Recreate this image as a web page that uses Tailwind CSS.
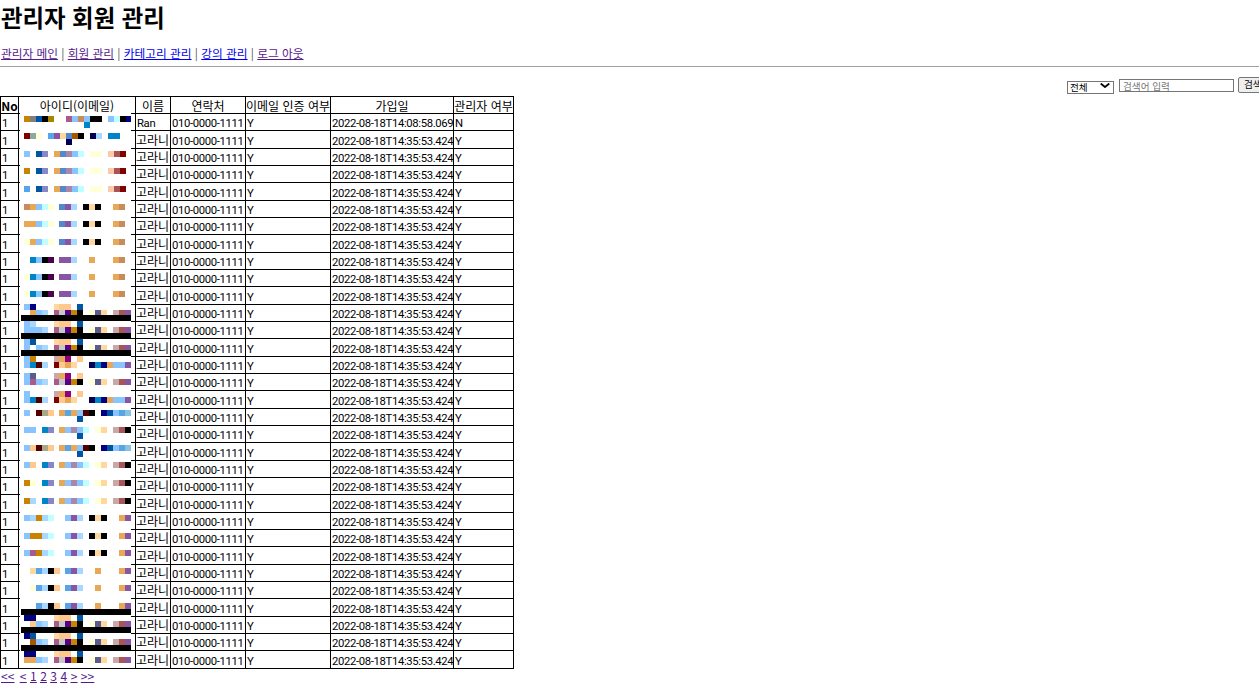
<!DOCTYPE html>
<html lang="ko">
  <head>
    <meta charset="UTF-8" />
    <title>관리자 회원 관리</title>
    <script src="https://cdn.jsdelivr.net/npm/@tailwindcss/browser@4"></script>
  </head>
  <body class="h-[686px] overflow-hidden bg-white text-[12px] leading-[16px] text-black font-['Noto_Sans_CJK_KR','Noto_Sans',sans-serif]">
    <h1 class="pl-px pt-[2px] text-[23.4px] leading-[30px] font-bold">관리자 회원 관리</h1>

    <nav class="mt-[13px] pl-px text-[11.7px] text-[#555]">
      <a href="#" class="text-[#551a8b] underline">관리자 메인</a> |
      <a href="#" class="text-[#551a8b] underline">회원 관리</a> |
      <a href="#" class="text-[#0000ee] underline">카테고리 관리</a> |
      <a href="#" class="text-[#0000ee] underline">강의 관리</a> |
      <a href="#" class="text-[#551a8b] underline">로그 아웃</a>
    </nav>

    <hr class="mt-[5px] border-t border-[#a0a0a0]" />

    <form class="mt-[10px] ml-[1067px] flex h-[16px] w-max items-end gap-[4px] text-[9.6px]">
      <div class="relative mb-px h-[13px] w-[47px]">
        <select class="h-[13px] w-[47px] appearance-none border border-[#767676] py-0 pl-[2px] text-[9.6px] leading-[11px]">
          <option>전체</option>
        </select>
        <svg class="absolute top-[4px] right-[4px]" width="10" height="5" viewBox="0 0 10 5" fill="none" stroke="#000" stroke-width="1.8"><path d="M.7.5 5 4 9.3.5" /></svg>
      </div>
      <input placeholder="검색어 입력" class="mb-px ml-px h-[13px] w-[115px] border border-[#767676] px-[3px] py-0 text-[9.6px] leading-[11px] placeholder:text-[#757575]" />
      <button type="button" class="h-[16px] w-[32px] shrink-0 rounded-[2px] border border-[#767676] bg-[#efefef] pl-[5px] text-left text-[9.6px] leading-none">검색</button>
    </form>

    <div class="relative mt-[3px] w-[514px]">
      <table class="w-[514px] table-fixed border-collapse border border-black">
        <colgroup>
          <col class="w-[18px]" />
          <col class="w-[117px]" />
          <col class="w-[35px]" />
          <col class="w-[75px]" />
          <col class="w-[85px]" />
          <col class="w-[123px]" />
          <col class="w-[60px]" />
        </colgroup>
        <thead>
          <tr class="h-[17px]">
            <th class="border border-black p-0 pt-[2px] leading-[14px] font-bold whitespace-nowrap">No</th>
            <th class="border border-black p-0 pt-[2px] leading-[14px] font-normal whitespace-nowrap">아이디(이메일)</th>
            <th class="border border-black p-0 pt-[2px] leading-[14px] font-normal whitespace-nowrap">이름</th>
            <th class="border border-black p-0 pt-[2px] leading-[14px] font-normal whitespace-nowrap">연락처</th>
            <th class="border border-black p-0 pt-[2px] leading-[14px] font-normal whitespace-nowrap">이메일 인증 여부</th>
            <th class="border border-black p-0 pt-[2px] leading-[14px] font-normal whitespace-nowrap">가입일</th>
            <th class="border border-black p-0 pt-[2px] leading-[14px] font-normal whitespace-nowrap">관리자 여부</th>
          </tr>
        </thead>
        <tbody id="rows"></tbody>
      </table>
      <!-- 아이디 가림 처리 -->
      <svg id="mask" class="absolute top-[17px] left-[20px]" width="111" height="555" viewBox="20 113 111 555" shape-rendering="crispEdges"></svg>
    </div>

    <div class="-mt-px flex gap-[3.5px] pl-px text-[#551a8b] underline">
      <a href="#" class="mr-[2px]">&lt;&lt;</a><a href="#">&lt;</a><a href="#">1</a><a href="#">2</a><a href="#">3</a><a href="#">4</a><a href="#">&gt;</a><a href="#">&gt;&gt;</a>
    </div>

    <script>
      const tbody = document.getElementById('rows');
      const cellClass = "border border-black p-0 pt-[3px] pl-px leading-[13px] whitespace-nowrap overflow-hidden text-[11.3px] tracking-[-0.35px] font-['Roboto','Noto_Sans_CJK_KR',sans-serif]";
      for (let i = 0; i < 32; i++) {
        const first = i === 0;
        const vals = [
          '1',
          '',
          first ? 'Ran' : '고라니',
          '010-0000-1111',
          'Y',
          first ? '2022-08-18T14:08:58.069' : '2022-08-18T14:35:53.424',
          first ? 'N' : 'Y',
        ];
        const tr = document.createElement('tr');
        // 17.34px average, table rows snap to whole pixels
        tr.style.height = (i % 3 === 1 ? 18 : 17) + 'px';
        vals.forEach((v, c) => {
          const td = document.createElement('td');
          td.className = cellClass;
          if (c === 2 && !first) td.style.cssText = 'font-size:12px;letter-spacing:0;padding-left:0';
          td.textContent = v;
          tr.appendChild(td);
        });
        tbody.appendChild(tr);
      }

      const colors = {
        a: '#88c4ff', b: '#0055a5', c: '#c88400', d: '#0084c8', e: '#e8a855', f: '#8855a5',
        g: '#c88c5c', h: '#a8d8ff', i: '#c0ffff', j: '#ffffd8', k: '#000000', l: '#ffd8a0',
        m: '#ffc88c', n: '#5588c8', o: '#55a5e8', p: '#a85c8c', q: '#000080', r: '#800000',
        s: '#a85555', t: '#8888c8', u: '#c8a8a8', v: '#5c5c8c', w: '#c8c8c8', x: '#550088',
        y: '#500050', z: '#808080', A: '#a88400', B: '#8caaa0', C: '#a85500', D: '#a888a8',
        E: '#ffc8a8', G: '#900080', H: '#a8a888', I: '#88c4e0', Q: '#000055', R: '#500000',
      };
      // [y, colour string, shift of the right part]
      const lines = [
        [116, 'czbkA..pagakk.aikq', 0], [122, '..........d', 0],
        [133, 'rBj.oflnCk.Qh.dd', 0], [139, '.......Q', 0],
        [151, 'a.bt.enDai.jj.Esr', 0],
        [168, 'c.bt.enDai.jj.Esr', 0],
        [186, 'o.bt.enDai.jj.Esr', 0],
        [204, 'geaij.nfh.klk..eg', -1],
        [221, 'eeaij.nfh.klk..eg', -1],
        [239, 'jeaij.nfh.klk..eg', -1],
        [257, '.daky.ffh..e...eg', -1],
        [274, 'jdaky.ffh..e...eg', -1],
        [291, 'jdaky.ffh..e...eg', -1],
        [304, 'aq...lmm.b', -1], [310, '.eah.pwxck.jvl.usf', -1],
        [321, 'ah...lmm.b', -1], [327, 'aaah.pwxck.jvl.usf', -1],
        [339, 'ab...lmm.b', -1], [345, 'a.ah.pwxck.jvl.usf', -1],
        [356, 'ac...ueG.m', -1], [362, 'adRh.rmel..Qdqeaaf', -1],
        [373, 'av...ueG.m', -1], [379, 'apah.pwxck.jvl.usf', -1],
        [391, 'a....ueG.m', -1], [397, 'adRh.rmel..Qdqeaaf', -1],
        [410, 'a.RHm.eoeaRk.qbaoI', -1], [416, '.........b', -1],
        [427, 'aa.dt.eaDai.jl.usk', -1], [433, '.........b', -1],
        [445, 'amRHm.eoeaRk.qbaoI', -1], [451, '.........b', -1],
        [462, 'am.dt.eaDai.jl.usk', -1],
        [480, 'cj.dt.eaDai.jl.usk', -1],
        [498, 'ch.dt.eaDai.jl.usk', -1],
        [515, 'ahchi..afh.klk..ef', -1],
        [533, 'acchi..afh.klk..ef', -1],
        [550, 'apchi..afh.klk..ef', -1],
        [568, '.lohkm.ofh..e...ef', -1],
        [585, '.johkm.ofh..e...ef', -1],
        [603, '..ohkm.ofh..e...ef', -1],
        [615, 'qq...lmm.b', -1], [621, '.mah.pwxck.jvl.usf', -1],
        [633, 'qb...lmm.b', -1], [639, '.Cah.pwxck.jvl.usf', -1],
        [651, 'qq...lmm.b', -1], [657, 'eeah.pwxck.jvl.usf', -1],
      ];
      const bars = [315, 333, 350, 609, 627, 645];

      let svg = '<rect x="20" y="113" width="111" height="555" fill="#fff"/>';
      lines.forEach(([y, str, shift]) => {
        [...str].forEach((ch, i) => {
          if (!colors[ch]) return;
          const x = 24 + i * 6 + (i >= 6 ? shift : 0);
          svg += `<rect x="${x}" y="${y}" width="6" height="6" fill="${colors[ch]}"/>`;
        });
      });
      bars.forEach((y) => {
        svg += `<rect x="21" y="${y}" width="110" height="6" fill="#000"/>`;
      });
      document.getElementById('mask').innerHTML = svg;
    </script>
  </body>
</html>
